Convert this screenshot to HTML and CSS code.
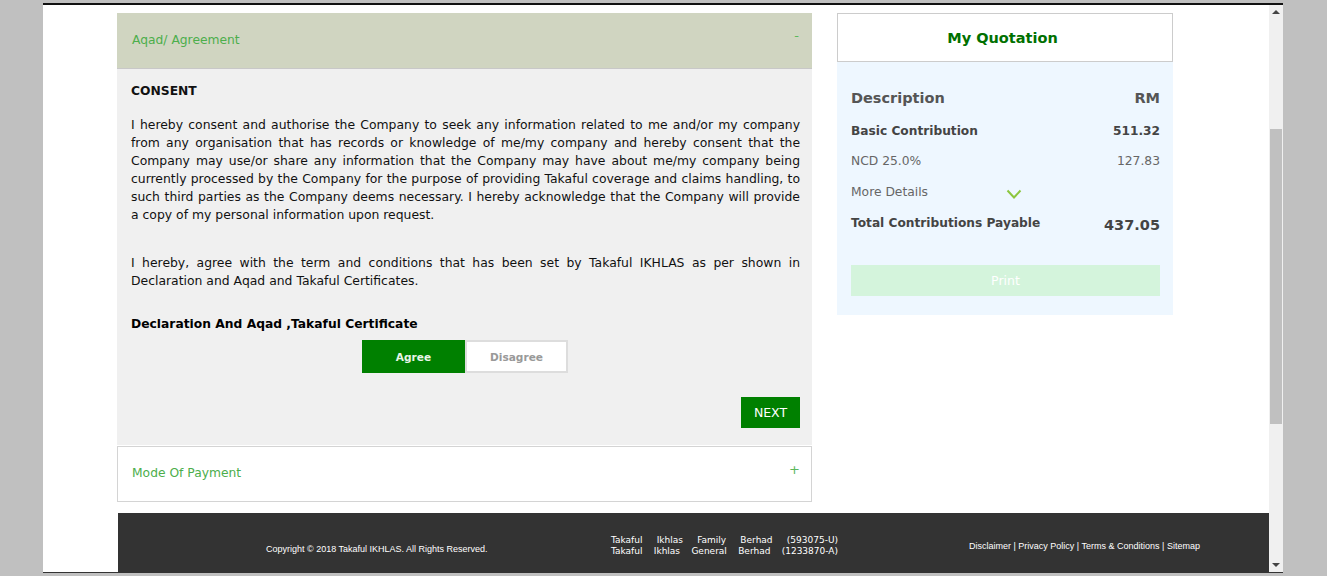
FILE: index.html
```html
<!DOCTYPE html>
<html lang="en">
<head>
  <meta charset="UTF-8">
  <title>Aqad / Agreement</title>
  <link rel="stylesheet" href="styles.css">
</head>
<body>

<div class="window">
  <div class="page">
    <div class="columns">
      <section class="left">
        <div class="acc-head acc-open">
          <span>Aqad/ Agreement</span>
          <span class="acc-sign">-</span>
        </div>
        <div class="acc-body">
          <p class="consent-title">CONSENT</p>
          <p class="consent-text">I hereby consent and authorise the Company to seek any information related to me and/or my company from any organisation that has records or knowledge of me/my company and hereby consent that the Company may use/or share any information that the Company may have about me/my company being currently processed by the Company for the purpose of providing Takaful coverage and claims handling, to such third parties as the Company deems necessary. I hereby acknowledge that the Company will provide a copy of my personal information upon request.</p>
          <p class="consent-text agree-text">I hereby, agree with the term and conditions that has been set by Takaful IKHLAS as per shown in Declaration and Aqad and Takaful Certificates.</p>
          <h4 class="cert-title">Declaration And Aqad ,Takaful Certificate</h4>
          <div class="toggle">
            <button class="btn-agree">Agree</button>
            <button class="btn-disagree">Disagree</button>
          </div>
          <div class="next-row">
            <button class="btn-next">NEXT</button>
          </div>
        </div>
        <div class="acc-head acc-closed">
          <span>Mode Of Payment</span>
          <span class="acc-sign">+</span>
        </div>
      </section>

      <aside class="right">
        <div class="quote-title">My Quotation</div>
        <div class="quote-body">
          <div class="row row-head"><span>Description</span><span>RM</span></div>
          <div class="row row-bold"><span>Basic Contribution</span><span>511.32</span></div>
          <div class="row row-plain"><span>NCD 25.0%</span><span>127.83</span></div>
          <div class="row row-plain row-more">
            <span>More Details</span>
            <svg class="chevron" width="16" height="10" viewBox="0 0 16 10"><path d="M1.5 1.5 L8 8.5 L14.5 1.5" fill="none" stroke="#8cc63f" stroke-width="2"/></svg>
          </div>
          <div class="row row-bold row-total"><span>Total Contributions Payable</span><span class="total-num">437.05</span></div>
          <button class="btn-print">Print</button>
        </div>
      </aside>
    </div>

    <footer class="footer">
      <div class="foot-copy">Copyright © 2018 Takaful IKHLAS. All Rights Reserved.</div>
      <div class="foot-company">
        <p>Takaful Ikhlas Family Berhad (593075-U)</p>
        <p>Takaful Ikhlas General Berhad (1233870-A)</p>
      </div>
      <div class="foot-links">Disclaimer | Privacy Policy | Terms &amp; Conditions | Sitemap</div>
    </footer>
  </div>

  <div class="scrollbar">
    <div class="arrow arrow-up"></div>
    <div class="track"><div class="thumb"></div></div>
    <div class="arrow arrow-down"></div>
  </div>
</div>

</body>
</html>
```

FILE: styles.css
```css
* {
  margin: 0;
  padding: 0;
  box-sizing: border-box;
}
html, body {
  height: 576px;
  overflow: hidden;
}
body {
  font-family: "DejaVu Sans", Verdana, sans-serif;
  background: #c0c0c0;
  color: #333;
}
button {
  font-family: inherit;
  border: none;
}
.window {
  display: flex;
  width: 1240px;
  height: 570px;
  margin: 3px 0 0 43px;
  border-top: 2px solid #111;
  border-bottom: 1px solid #333;
  background: #fff;
}
.page {
  flex: 1;
  padding: 8px 0 0 74px;
  display: flex;
  flex-direction: column;
}
.columns {
  display: flex;
  gap: 25px;
  height: 500px;
}

/* accordion */
.left {
  width: 695px;
}
.acc-head {
  display: flex;
  justify-content: space-between;
  color: #4cae4c;
  font-size: 12.3px;
  padding: 20px 13px 0 15px;
  height: 56px;
}
.acc-open {
  background: #d0d5c1;
  border-bottom: 1px solid #c8c8c8;
}
.acc-closed {
  background: #fff;
  border: 1px solid #d4d4d4;
  padding: 19px 11px 0 14px;
  margin-top: 1px;
}
.acc-sign {
  margin-top: -5px;
  color: #5cb85c;
  font-size: 13px;
}
.acc-closed .acc-sign {
  margin-top: -4px;
}
.acc-body {
  background: #f0f0f0;
  padding: 14px 12px 0 14px;
  height: 376px;
  color: #111;
}
.consent-title {
  font-size: 12.3px;
  font-weight: bold;
  line-height: 16px;
}
.consent-text {
  font-size: 12.4px;
  line-height: 18px;
  text-align: justify;
  margin-top: 17px;
}
.agree-text {
  margin-top: 30px;
}
.cert-title {
  font-size: 12.3px;
  color: #000;
  line-height: 18px;
  margin-top: 25px;
}
.toggle {
  display: flex;
  justify-content: center;
  margin-top: 7px;
  padding-right: 1px;
}
.toggle button {
  width: 103px;
  height: 33px;
  font-size: 10.6px;
  font-weight: bold;
}
.btn-agree {
  background: #008000;
  color: #e8f5e8;
}
.btn-disagree {
  background: #fff;
  color: #999;
  border: 2px solid #ddd;
}
.next-row {
  display: flex;
  justify-content: flex-end;
  margin-top: 24px;
}
.btn-next {
  width: 59px;
  height: 31px;
  background: #008000;
  color: #fff;
  font-size: 12.5px;
}

/* quotation box */
.right {
  width: 336px;
}
.quote-title {
  height: 49px;
  background: #fff;
  border: 1px solid #ccc;
  color: #007000;
  font-size: 14.5px;
  font-weight: bold;
  text-align: center;
  line-height: 48px;
  padding-right: 5px;
}
.quote-body {
  background: #eef7ff;
  height: 253px;
  padding: 25px 13px 0 14px;
}
.row {
  display: flex;
  justify-content: space-between;
  align-items: center;
  height: 30.3px;
}
.row-head {
  height: 22px;
  font-size: 14.5px;
  font-weight: bold;
  color: #555;
  margin-bottom: 7px;
}
.row-bold {
  font-size: 12.2px;
  font-weight: bold;
  color: #444;
}
.row-plain {
  font-size: 12.3px;
  color: #666;
}
.row-more {
  justify-content: flex-start;
}
.row-total {
  margin-top: 1px;
}
.chevron {
  margin: 4px 0 0 78px;
}
.total-num {
  font-size: 14.5px;
  margin-top: 4px;
}
.btn-print {
  display: block;
  width: 100%;
  height: 31px;
  margin-top: 27px;
  background: #d4f4dc;
  color: #fff;
  font-size: 12.5px;
}

/* footer */
.footer {
  display: flex;
  align-items: center;
  height: 59px;
  margin-left: 1px;
  background: #333;
  color: #fff;
  font-family: "Liberation Sans", Arial, sans-serif;
  font-size: 9px;
}
.foot-copy {
  width: 493px;
  padding-left: 148px;
  margin-top: 12px;
}
.foot-company {
  width: 227px;
  font-family: "DejaVu Sans", Verdana, sans-serif;
  font-size: 9px;
  line-height: 11px;
  margin-top: 6px;
}
.foot-company p {
  text-align-last: justify;
}
.foot-links {
  margin-left: 131px;
  margin-top: 6px;
}

/* fake browser scrollbar */
.scrollbar {
  width: 14px;
  display: flex;
  flex-direction: column;
  background: #f0f0f0;
}
.arrow {
  height: 14px;
  flex: none;
  position: relative;
}
.arrow::after {
  content: "";
  position: absolute;
  left: 3px;
  border-left: 4px solid transparent;
  border-right: 4px solid transparent;
}
.arrow-up::after {
  top: 5px;
  border-bottom: 4px solid #444;
}
.arrow-down::after {
  top: 5px;
  border-top: 4px solid #444;
}
.track {
  flex: 1;
  padding-top: 110px;
}
.thumb {
  width: 12px;
  margin-left: 1px;
  height: 295px;
  background: #c0c0c0;
}
```
